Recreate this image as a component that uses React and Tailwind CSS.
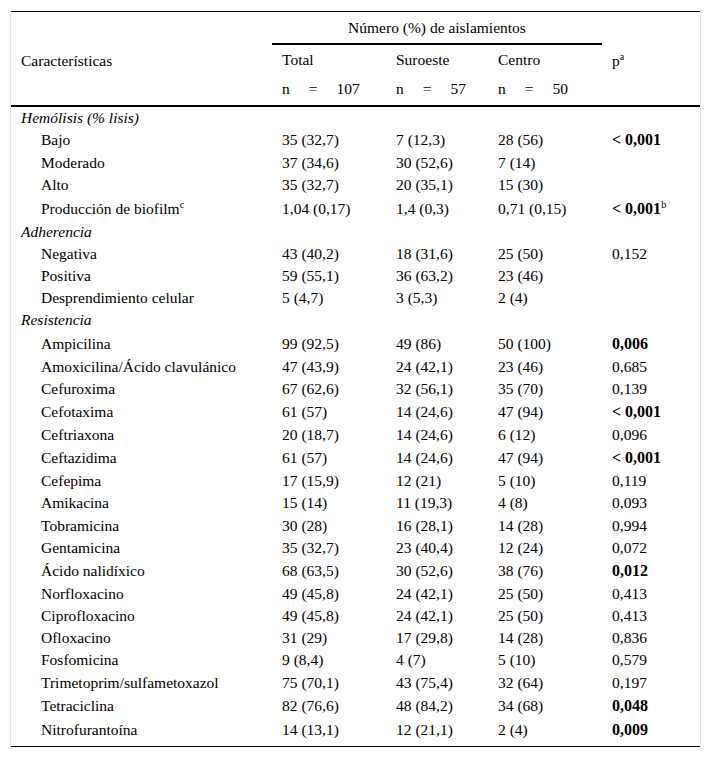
import React from "react";

const rows = [
  { section: "Hemólisis (% lisis)" },
  { label: "Bajo", total: "35 (32,7)", so: "7 (12,3)", ce: "28 (56)", p: "< 0,001", bold: true },
  { label: "Moderado", total: "37 (34,6)", so: "30 (52,6)", ce: "7 (14)", p: "" },
  { label: "Alto", total: "35 (32,7)", so: "20 (35,1)", ce: "15 (30)", p: "" },
  { label: "Producción de biofilm", sup: "c", total: "1,04 (0,17)", so: "1,4 (0,3)", ce: "0,71 (0,15)", p: "< 0,001", pSup: "b", bold: true },
  { section: "Adherencia" },
  { label: "Negativa", total: "43 (40,2)", so: "18 (31,6)", ce: "25 (50)", p: "0,152" },
  { label: "Positiva", total: "59 (55,1)", so: "36 (63,2)", ce: "23 (46)", p: "" },
  { label: "Desprendimiento celular", total: "5 (4,7)", so: "3 (5,3)", ce: "2 (4)", p: "" },
  { section: "Resistencia" },
  { label: "Ampicilina", total: "99 (92,5)", so: "49 (86)", ce: "50 (100)", p: "0,006", bold: true },
  { label: "Amoxicilina/Ácido clavulánico", total: "47 (43,9)", so: "24 (42,1)", ce: "23 (46)", p: "0,685" },
  { label: "Cefuroxima", total: "67 (62,6)", so: "32 (56,1)", ce: "35 (70)", p: "0,139" },
  { label: "Cefotaxima", total: "61 (57)", so: "14 (24,6)", ce: "47 (94)", p: "< 0,001", bold: true },
  { label: "Ceftriaxona", total: "20 (18,7)", so: "14 (24,6)", ce: "6 (12)", p: "0,096" },
  { label: "Ceftazidima", total: "61 (57)", so: "14 (24,6)", ce: "47 (94)", p: "< 0,001", bold: true },
  { label: "Cefepima", total: "17 (15,9)", so: "12 (21)", ce: "5 (10)", p: "0,119" },
  { label: "Amikacina", total: "15 (14)", so: "11 (19,3)", ce: "4 (8)", p: "0,093" },
  { label: "Tobramicina", total: "30 (28)", so: "16 (28,1)", ce: "14 (28)", p: "0,994" },
  { label: "Gentamicina", total: "35 (32,7)", so: "23 (40,4)", ce: "12 (24)", p: "0,072" },
  { label: "Ácido nalidíxico", total: "68 (63,5)", so: "30 (52,6)", ce: "38 (76)", p: "0,012", bold: true },
  { label: "Norfloxacino", total: "49 (45,8)", so: "24 (42,1)", ce: "25 (50)", p: "0,413" },
  { label: "Ciprofloxacino", total: "49 (45,8)", so: "24 (42,1)", ce: "25 (50)", p: "0,413" },
  { label: "Ofloxacino", total: "31 (29)", so: "17 (29,8)", ce: "14 (28)", p: "0,836" },
  { label: "Fosfomicina", total: "9 (8,4)", so: "4 (7)", ce: "5 (10)", p: "0,579" },
  { label: "Trimetoprim/sulfametoxazol", total: "75 (70,1)", so: "43 (75,4)", ce: "32 (64)", p: "0,197" },
  { label: "Tetraciclina", total: "82 (76,6)", so: "48 (84,2)", ce: "34 (68)", p: "0,048", bold: true },
  { label: "Nitrofurantoína", total: "14 (13,1)", so: "12 (21,1)", ce: "2 (4)", p: "0,009", bold: true, last: true },
];

function NCount({ value }) {
  return (
    <span className="flex gap-[19px]">
      <span>n</span>
      <span>=</span>
      <span>{value}</span>
    </span>
  );
}

export default function App() {
  return (
    <div className="bg-white min-h-[759px] pt-[11px] text-black font-['Liberation_Serif','Times_New_Roman',serif]">
      <div className="ml-[10px] w-[691px] border-x border-[#e4e4e4]">
        <table className="w-full border-collapse text-[15.5px] leading-[17px]">
          <colgroup>
            <col className="w-[261px]" />
            <col className="w-[114px]" />
            <col className="w-[102px]" />
            <col className="w-[114px]" />
            <col />
          </colgroup>
          <thead>
            <tr className="border-t border-black h-[32px]">
              <th rowSpan={3} className="pl-[10px] pt-[4px] text-left font-normal align-middle border-b-2 border-black">
                Características
              </th>
              <th colSpan={3} className="font-normal text-center border-b-2 border-black align-middle">
                Número (%) de aislamientos
              </th>
              <th rowSpan={3} className="pl-[10px] pt-[4px] text-left font-normal align-middle border-b-2 border-black">
                p<sup className="text-[10px] -top-[6px]">a</sup>
              </th>
            </tr>
            <tr className="h-[30px]">
              <th className="pl-[10px] text-left font-normal">Total</th>
              <th className="pl-[10px] text-left font-normal">Suroeste</th>
              <th className="pl-[10px] text-left font-normal">Centro</th>
            </tr>
            <tr className="h-[32px] border-b-2 border-black">
              <th className="pl-[10px] pb-[2px] text-left font-normal"><NCount value="107" /></th>
              <th className="pl-[10px] pb-[2px] text-left font-normal"><NCount value="57" /></th>
              <th className="pl-[10px] pb-[2px] text-left font-normal"><NCount value="50" /></th>
            </tr>
          </thead>
          <tbody className="border-b border-black">
            {rows.map((r, i) =>
              r.section ? (
                <tr key={i} className="h-[22.2px]">
                  <td colSpan={5} className="pl-[10px] italic">{r.section}</td>
                </tr>
              ) : (
                <tr key={i} className={r.last ? "h-[29px]" : r.bold ? "h-[24px]" : "h-[22.2px]"}>
                  <td className={"pl-[30px] " + (r.last ? "align-top pt-[4px]" : "")}>
                    {r.label}
                    {r.sup && <sup className="text-[10px] -top-[6px]">{r.sup}</sup>}
                  </td>
                  <td className={"pl-[10px] " + (r.last ? "align-top pt-[4px]" : "")}>{r.total}</td>
                  <td className={"pl-[10px] " + (r.last ? "align-top pt-[4px]" : "")}>{r.so}</td>
                  <td className={"pl-[10px] " + (r.last ? "align-top pt-[4px]" : "")}>{r.ce}</td>
                  <td className={"pl-[10px] " + (r.bold ? "font-bold text-[16px] " : "") + (r.last ? "align-top pt-[4px]" : "")}>
                    {r.p}
                    {r.pSup && <sup className="text-[10px] font-normal -top-[6px]">{r.pSup}</sup>}
                  </td>
                </tr>
              )
            )}
          </tbody>
        </table>
      </div>
    </div>
  );
}
